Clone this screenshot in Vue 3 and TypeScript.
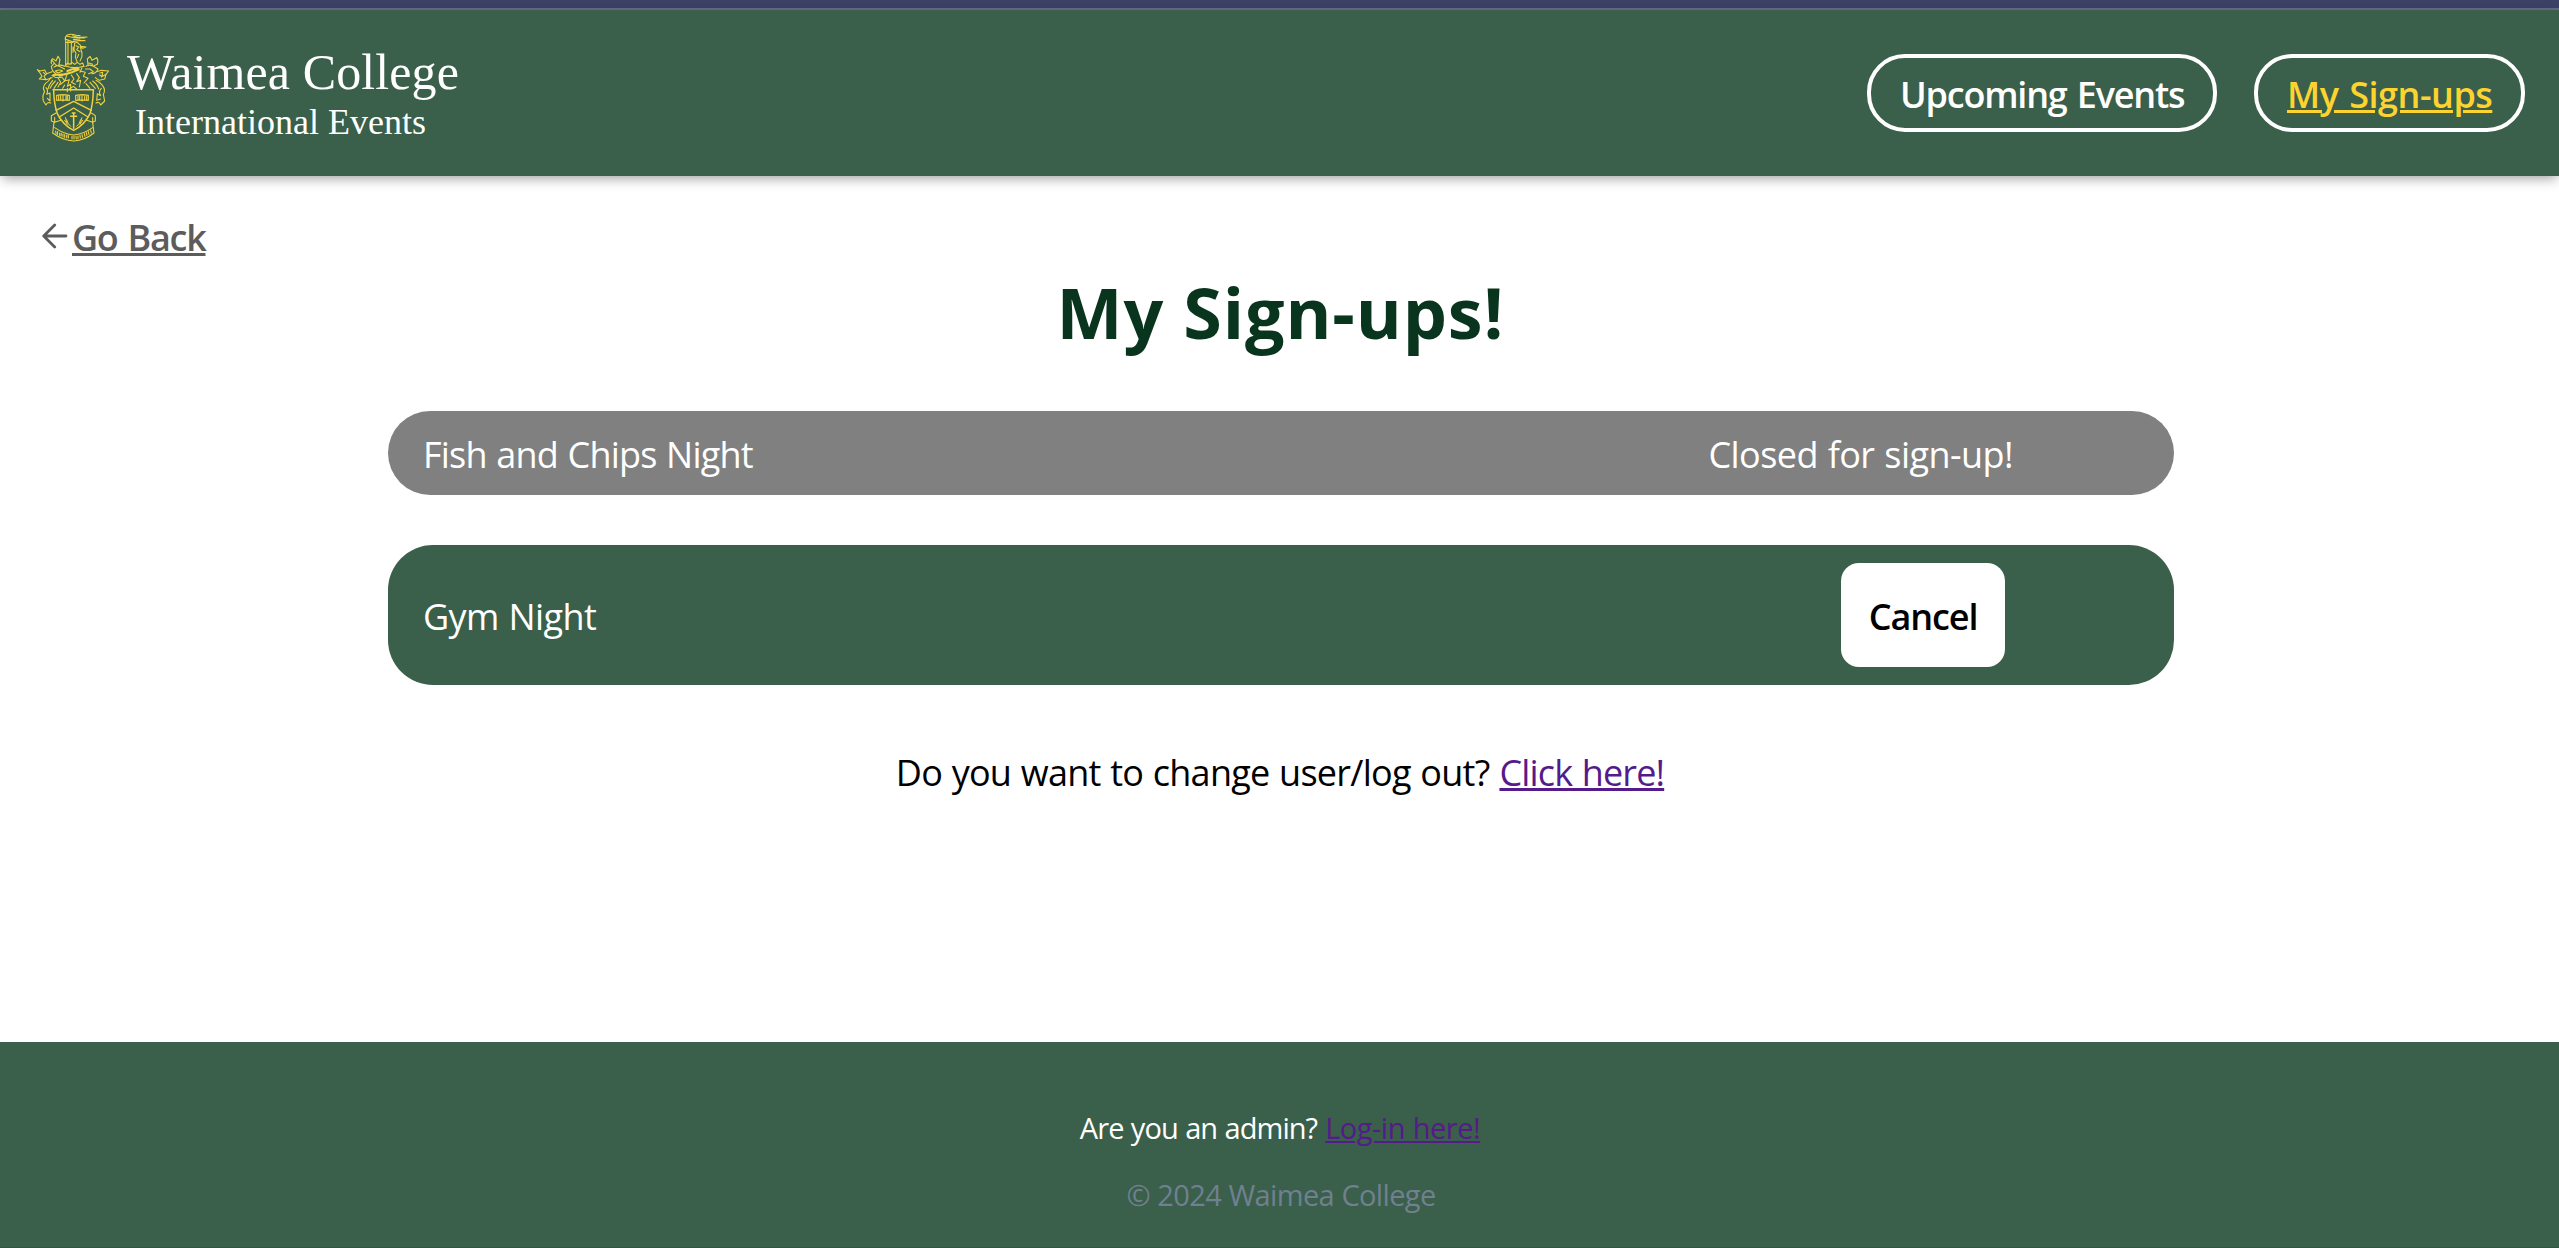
<script setup lang="ts">
interface NavItem { label: string; active: boolean; cls: string }
interface SignUp { name: string; open: boolean; cls: string }

const nav: NavItem[] = [
  { label: 'Upcoming Events', active: false, cls: 'events' },
  { label: 'My Sign-ups', active: true, cls: 'signups' },
]
const signUps: SignUp[] = [
  { name: 'Fish and Chips Night', open: false, cls: 'closed' },
  { name: 'Gym Night', open: true, cls: 'open' },
]
</script>

<template>
  <div class="page">
    <div class="strip"></div>
    <header class="header">
      <svg class="crest" viewBox="0 0 255 375" fill="none" stroke="#f0d23e" stroke-width="3.3" stroke-linecap="round" stroke-linejoin="round">
        <!-- torch and plume -->
        <path d="M107 44V121M114 46V120M124 52V117M107 52H130M106 44Q104 36 112 30Q124 25 138 31L150 32M108 43L128 50L146 47L165 47M112 34L132 38L171 36M128 32Q150 41 165 38M130 44L150 42" />
        <path d="M134 54Q142 50 146 56Q154 60 152 70L156 84Q158 96 150 108M134 54L132 74L138 84L136 96L142 112M138 62L146 66L140 74L150 80M146 88L142 98M152 64L168 66L158 70L150 66M129 66V82" />
        <path d="M106 122L112 114L120 118L126 112L134 118L142 112L150 118L158 114L162 124M108 124Q134 132 162 124" />
        <!-- left bird and ribbon -->
        <path d="M64 116Q62 106 68 101L78 108L84 94L90 104L86 122M66 106L78 120L92 126L104 132M72 116L64 124Q66 140 78 146M72 126Q88 116 104 124M76 138Q90 132 98 138L84 144Z" />
        <path d="M22 134L30 138L44 135L50 146L42 154L48 164L28 162L36 154L30 144ZM50 146L66 140M48 164L66 158M40 142L46 148" />
        <!-- helm and mantling -->
        <path d="M70 150L108 148L146 134M88 152L126 142L146 132Q130 130 112 138" stroke-width="6" />
        <path d="M66 152Q80 162 96 156L104 168L92 178M84 158L92 172L84 186M110 152L104 168L118 164L112 184L122 178V198M124 150L132 162L124 172L136 178M140 146L148 158L140 170L152 166L148 186M150 138L166 142L160 154L174 160L162 174M104 180L98 190M118 192L130 184L140 192M112 190V200" />
        <!-- right bird and ribbon -->
        <path d="M174 120L172 102L180 94L186 106L200 98Q206 106 202 118L192 122M176 114L188 118M168 124Q180 116 194 126L204 132Q198 146 186 146M166 132L180 132L190 140L176 146M156 128L150 142" />
        <path d="M200 140L214 136L236 138L228 148L224 162L208 166L196 158M210 144L218 142L216 154L208 150M228 148L214 156" />
        <!-- outer mantling scrolls -->
        <path d="M62 158Q58 168 46 176Q36 188 44 200Q36 212 40 228L48 240Q52 230 62 234M68 166Q56 180 54 192M76 168Q64 180 60 190M48 188Q56 196 50 208L60 204V228L52 220M84 172L72 190" />
        <path d="M198 166Q208 170 218 182Q228 196 220 208L224 228L212 240Q208 228 198 234M188 168Q202 178 206 192M180 172L196 190M214 190Q204 200 212 212L202 206L200 226L212 222M168 176L180 190" />
        <!-- shield -->
        <path d="M69 194H191M71 196Q72 238 82 266Q98 300 131 316Q164 300 180 266Q189 238 190 196" stroke-width="4.4" />
        <path d="M78 256L131 229L184 256M88 276L131 249L174 276" stroke-width="4" />
        <!-- open books -->
        <path d="M80 211L97 209L99 211L101 209L118 211V226L101 225L99 228L97 225L80 226ZM99 211V226M86 214V223M92 213V223M108 213V223M112 214V223" />
        <path d="M137 211L154 209L156 211L158 209L175 211V226L158 225L156 228L154 225L137 226ZM156 211V226M144 214V223M149 213V223M164 213V223M170 214V223" />
        <!-- cross and sprays -->
        <path d="M131 264V310M122 274H140M127 264H135" stroke-width="4.6" />
        <path d="M106 278Q106 292 122 304M110 284L114 294M104 286L112 298M156 278Q156 292 140 304M152 284L148 294M158 286L150 298" stroke-width="3" />
        <!-- scroll -->
        <path d="M78 264L64 272V288L74 292V278M74 292L92 286M184 264L196 272V288L188 292V278M188 292L170 286M72 292L68 324Q98 346 131 348Q164 346 192 324L188 292M74 308Q102 328 131 330Q160 328 188 308" />
        <path d="M77 318L78 325M83 320L82 329M89 324V331M94 325L93 333M99 327V335M104 329V337M110 330V338M115 331V339M126 334V342M132 334V342M138 334L139 342M144 333V341M150 331L151 339M156 329L158 337M163 326L165 334M169 323L171 331M175 320L177 328M182 315L184 324" />
      </svg>
      <div class="brand">
        <div class="college">Waimea College</div>
        <div class="sub">International Events</div>
      </div>
      <nav class="nav">
        <a v-for="n in nav" :key="n.label" class="pill" :class="[n.cls, { active: n.active }]"><span>{{ n.label }}</span></a>
      </nav>
    </header>

    <main class="main">
      <a class="back">
        <svg class="arrow" viewBox="0 0 26 26" fill="none" stroke="#5c5c5c" stroke-width="2.8" stroke-linecap="round" stroke-linejoin="round">
          <path d="M24 13H2M12.7 2L1.7 13L12.7 24" />
        </svg>
        <span>Go Back</span>
      </a>
      <h1 class="title">My Sign-ups!</h1>
      <section class="list">
        <div v-for="s in signUps" :key="s.name" class="row" :class="s.cls">
          <span class="name">{{ s.name }}</span>
          <button v-if="s.open" class="cancel">Cancel</button>
          <span v-else class="status">Closed for sign-up!</span>
        </div>
      </section>
      <p class="logout"><span>Do you want to change user/log out?</span><a>Click here!</a></p>
    </main>

    <footer class="footer">
      <p class="admin"><span>Are you an admin?</span><a>Log-in here!</a></p>
      <p class="copy">© 2024 Waimea College</p>
    </footer>
  </div>
</template>

<style>
body { margin: 0; background: #fff; }
</style>

<style scoped>
.page {
  display: flex;
  flex-direction: column;
  height: 1248px;
  overflow: hidden;
  box-sizing: border-box;
  border-bottom: 1px solid #36504f;
  font-family: "Open Sans", "Noto Sans", sans-serif;
  font-size: 36px;
  color: #000;
}
.strip {
  flex: none;
  box-sizing: border-box;
  height: 10px;
  background: #3c4166;
  border-bottom: 2px solid #666b8c;
}
.header {
  flex: none;
  display: flex;
  align-items: flex-start;
  box-sizing: border-box;
  height: 166px;
  padding: 0 34px 0 30px;
  background: #3a5f4a;
  box-shadow: 0 4px 12px -2px rgba(0, 0, 0, 0.4);
}
.crest { width: 85px; height: 125px; margin-top: 15px; }
.brand {
  display: flex;
  flex-direction: column;
  gap: 7px;
  padding: 37px 0 0 12px;
  color: #fff;
  font-family: "Liberation Serif", serif;
  white-space: nowrap;
}
.college { font-size: 50px; line-height: 50px; letter-spacing: 0.1px; }
.sub { padding-left: 8px; font-size: 36px; line-height: 36px; }
.nav { display: flex; gap: 37px; margin: 44px 0 0 auto; }
.pill {
  box-sizing: border-box;
  height: 78px;
  padding: 2px 0 0 29px;
  border: 4px solid #fff;
  border-radius: 38px;
  color: #fff;
  font-weight: 600;
  line-height: 70px;
  white-space: nowrap;
}
.events { width: 350px; letter-spacing: -1.2px; word-spacing: 2px; }
.signups { width: 271px; letter-spacing: -0.5px; word-spacing: 2px; }
.pill.active { color: #fdd32f; }
.pill.active span, .back span, .logout a { text-decoration: underline; text-decoration-thickness: 3px; text-underline-offset: 2px; }
.main { flex: none; display: flex; flex-direction: column; align-items: center; height: 866px; box-sizing: border-box; padding-top: 36px; }
.back {
  align-self: flex-start;
  display: flex;
  align-items: center;
  gap: 4px;
  height: 50px;
  padding-left: 42px;
  color: #5c5c5c;
  font-weight: 600;
  line-height: 50px;
  letter-spacing: -1.3px;
  word-spacing: 2px;
}
.back span { padding-top: 2px; }
.arrow { width: 26px; height: 26px; margin-top: -2px; }
.title {
  margin: 5px 0 0 2px;
  color: #09341d;
  font-size: 70px;
  font-weight: 700;
  line-height: 90px;
  letter-spacing: 0.9px;
}
.list { display: flex; flex-direction: column; gap: 50px; width: 1786px; margin: 54px 0 0 3px; }
.row {
  display: flex;
  align-items: center;
  justify-content: space-between;
  box-sizing: border-box;
  padding-left: 35px;
  border-radius: 45px;
  color: #fff;
}
.name, .status { line-height: 50px; padding-top: 3px; letter-spacing: -0.8px; word-spacing: 1px; }
.closed { height: 84px; background: #808080; padding-right: 161px; }
.status { letter-spacing: -0.55px; }
.open { height: 140px; background: #3a5f4a; padding-right: 169px; }
.open .name { letter-spacing: -0.6px; }
.cancel {
  width: 164px;
  height: 104px;
  padding: 3px 0 0;
  border: 0;
  border-radius: 18px;
  background: #fff;
  color: #000;
  font: 600 36px/50px "Open Sans", "Noto Sans", sans-serif;
  letter-spacing: -1.1px;
}
.logout { display: flex; gap: 10px; margin: 63px 0 0 1px; line-height: 50px; letter-spacing: -0.75px; word-spacing: 1px; }
.logout a { color: #551a8b; letter-spacing: -0.85px; }
.footer {
  flex: 1;
  display: flex;
  flex-direction: column;
  align-items: center;
  gap: 27px;
  padding-top: 66px;
  background: #3a5f4a;
  font-size: 29px;
  line-height: 40px;
}
.admin { display: flex; gap: 8px; margin: 0 0 0 1px; color: #fff; letter-spacing: -0.95px; word-spacing: 0.8px; }
.admin a { color: #551a8b; letter-spacing: -0.5px; text-decoration: underline; text-decoration-thickness: 2px; text-underline-offset: 2px; }
.copy { margin: 0; padding-left: 3px; color: #708090; letter-spacing: -0.65px; word-spacing: 0.5px; }
</style>
